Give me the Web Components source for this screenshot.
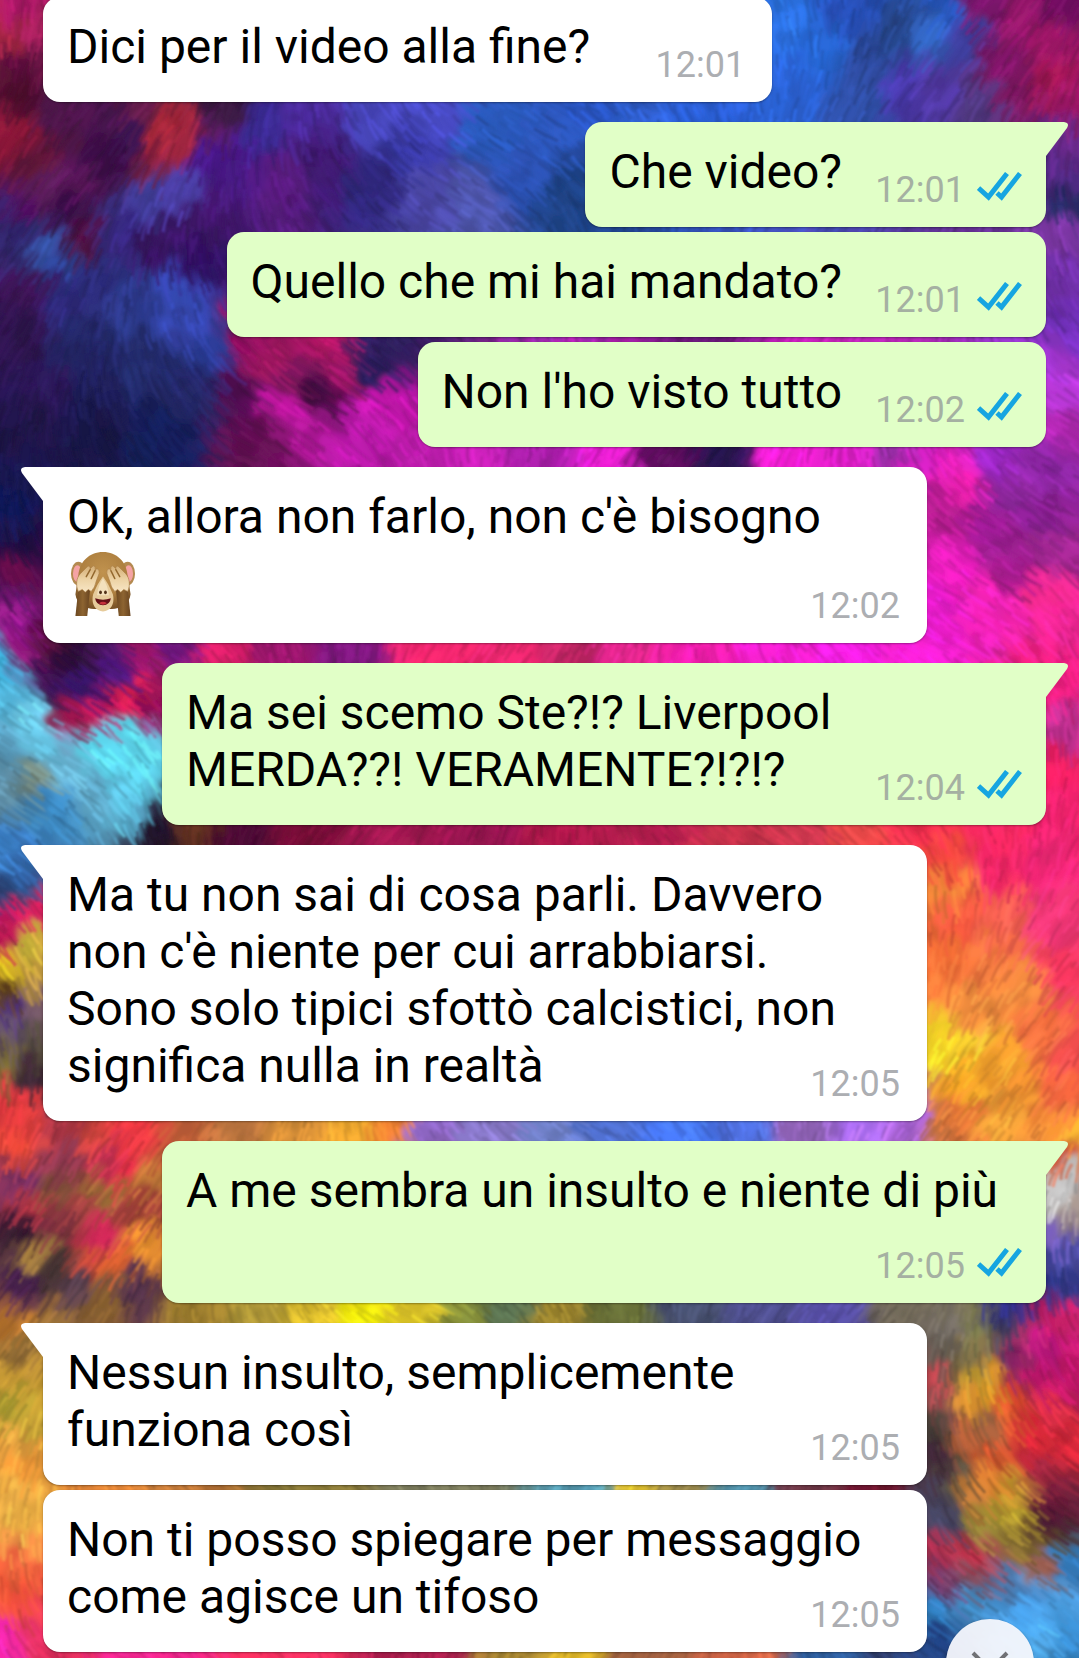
<!DOCTYPE html>
<html lang="it">
<head>
<meta charset="utf-8">
<meta name="viewport" content="width=device-width, initial-scale=1">
<title>Chat</title>
<style>
	body {
		background: #2c1858;
		font-family: Roboto, "Noto Sans", sans-serif;
		margin: 0;
	}
</style>
</head>
<body>
	<chat-screen>
		<chat-wallpaper slot="wallpaper"></chat-wallpaper>
		<chat-message time="12:01">Dici per il video alla fine?</chat-message>
		<chat-message time="12:01" outgoing first>Che video?</chat-message>
		<chat-message time="12:01" outgoing>Quello che mi hai mandato?</chat-message>
		<chat-message time="12:02" outgoing>Non l'ho visto tutto</chat-message>
		<chat-message time="12:02" first>Ok, allora non farlo, non c'è bisogno <monkey-emoji></monkey-emoji></chat-message>
		<chat-message time="12:04" outgoing first>Ma sei scemo Ste?!? Liverpool MERDA??! VERAMENTE?!?!?</chat-message>
		<chat-message time="12:05" first>Ma tu non sai di cosa parli. Davvero non c'è niente per cui arrabbiarsi.<br>Sono solo tipici sfottò calcistici, non significa nulla in realtà</chat-message>
		<chat-message time="12:05" outgoing first>A me sembra un insulto e niente di più</chat-message>
		<chat-message time="12:05" first>Nessun insulto, semplicemente funziona così</chat-message>
		<chat-message time="12:05">Non ti posso spiegare per messaggio come agisce un tifoso</chat-message>
		<scroll-button slot="action"></scroll-button>
	</chat-screen>

<script>
/**
 * @class ChatScreen
 * @description Column of messages over a wallpaper, with a slot for a floating action.
 */
class ChatScreen extends HTMLElement {
	constructor() {
		super();
		this.attachShadow({mode:'open'});
		this.shadowRoot.innerHTML = `
			<style>
				:host {
					display: block;
					min-height: 100vh;
					overflow: hidden;
					position: relative;
				}

				/* the list is scrolled by a few pixels */
				main {
					display: flex;
					flex-direction: column;
					gap: 5px;
					margin-top: -3px;
					padding: 0 33px 6px 43px;
					position: relative;
				}
			</style>
			<slot name="wallpaper"></slot>
			<main><slot></slot></main>
			<slot name="action"></slot>
		`;
	}
}

/**
 * @class ChatMessage
 * @description One bubble.
 * Attributes: time, outgoing (green, with ticks), first (first of a group, with a tail).
 */
class ChatMessage extends HTMLElement {
	static observedAttributes = ['time'];

	constructor() {
		super();
		this.attachShadow({mode:'open'});
		this.shadowRoot.innerHTML = `
			<style>
				:host {
					--bubble: #fff;
					--meta: 158px;

					align-self: flex-start;
					background: var(--bubble);
					border-radius: 17px;
					box-shadow: 0 1px 2px rgba(0,0,0,.35);
					box-sizing: border-box;
					color: #000;
					display: grid;
					max-width: calc(100% - 119px);
					padding: 21px 24px 16px;
					position: relative;
				}

				:host([outgoing]) {
					--bubble: #e1ffc7;
					--meta: 180px;

					align-self: flex-end;
				}

				:host([first]) {
					border-top-left-radius: 0;
					margin-top: 15px;
				}

				:host([outgoing][first]) {
					border-top-left-radius: 17px;
					border-top-right-radius: 0;
				}

				p, footer {
					grid-area: 1 / 1;
				}

				p {
					font-size: 48px;
					line-height: 57px;
					margin: 0 0 11px;
				}

				/* keeps the end of the last line clear of the time */
				.room {
					display: inline-block;
					height: 1px;
					width: var(--meta);
				}

				footer {
					align-items: flex-end;
					align-self: end;
					color: #acaeb2;
					display: flex;
					font-size: 36px;
					gap: 12px;
					justify-self: end;
					line-height: 42px;
					padding-right: 3px;
				}

				:host([outgoing]) footer {
					color: #a5b0a2;
					padding-right: 0;
				}

				.ticks {
					display: none;
					fill: none;
					height: 29px;
					margin-bottom: 10px;
					stroke: #16a5e1;
					stroke-width: 5;
					width: 45px;
				}

				:host([outgoing]) .ticks {
					display: block;
				}

				.tail {
					display: none;
					fill: var(--bubble);
					height: 34px;
					position: absolute;
					right: 100%;
					top: 0;
					transform: scaleX(-1);
					width: 22px;
				}

				:host([first]) .tail {
					display: block;
				}

				:host([outgoing]) .tail {
					left: 100%;
					right: auto;
					transform: none;
				}
			</style>
			<svg class="tail" viewBox="0 0 22 34" aria-hidden="true"><path d="M-1 0H18Q24 1 21 6L0 34H-1Z"/></svg>
			<p><slot></slot><span class="room"></span></p>
			<footer>
				<time></time>
				<svg class="ticks" viewBox="0 0 45 29" role="img" aria-label="Letto">
					<path d="M1.500 16L11.500 25L30 1.500M20 21L24.500 25L43 1.500"/>
				</svg>
			</footer>
		`;
	}

	attributeChangedCallback(attr, oldval, newval) {
		this.shadowRoot.querySelector('time').textContent = newval;
	}
}

/**
 * @class MonkeyEmoji
 * @description The see-no-evil monkey, as an inline picture.
 */
class MonkeyEmoji extends HTMLElement {
	constructor() {
		super();
		this.attachShadow({mode:'open'});
		this.shadowRoot.innerHTML = `
			<style>
				:host {
					display: inline-block;
					height: 65px;
					margin: 6px 5px 0 3px;
					vertical-align: bottom;
					width: 66px;
				}

				svg { display: block; }
			</style>
			<svg viewBox="0 0 66 66" width="66" height="65" role="img" aria-label="Scimmietta che non vede">
				<defs>
					<radialGradient id="fur" cx=".5" cy=".35" r=".65">
						<stop offset="0" stop-color="#c0924e"/>
						<stop offset=".65" stop-color="#ad7f3f"/>
						<stop offset="1" stop-color="#7a5427"/>
					</radialGradient>
					<linearGradient id="arm" x1="0" y1="0" x2="1" y2="0">
						<stop offset="0" stop-color="#6b4720"/>
						<stop offset=".5" stop-color="#8d6431"/>
						<stop offset="1" stop-color="#674320"/>
					</linearGradient>
					<linearGradient id="hand" x1="0" y1="0" x2="0" y2="1">
						<stop offset="0" stop-color="#d3ad75"/>
						<stop offset=".5" stop-color="#ecd2a4"/>
						<stop offset="1" stop-color="#f8e6c6"/>
					</linearGradient>
				</defs>
				<ellipse cx="8" cy="23" rx="7.500" ry="12" fill="#b48a50"/>
				<ellipse cx="58" cy="23" rx="7.500" ry="12" fill="#b48a50"/>
				<ellipse cx="7" cy="23" rx="4.500" ry="8.500" fill="#f5a3a4"/>
				<ellipse cx="59" cy="23" rx="4.500" ry="8.500" fill="#f5a3a4"/>
				<path d="M33 1C47 1 57 11 58 25L61 44C60 54 50 59 42 59H24C16 59 6 54 5 44L8 25C9 11 19 1 33 1Z" fill="url(#fur)"/>
				<path d="M33 26C37 31 40 37 43 44C45 52 42 58 38 60Q33 63 28 60C24 58 21 52 23 44C26 37 29 31 33 26Z" fill="#e6cb9b"/>
				<path d="M33 28Q38 35 39 45H27Q28 35 33 28Z" fill="#f3e1bd"/>
				<path d="M8 38H20L17 66H5Z" fill="url(#arm)"/>
				<path d="M46 38H58L61 66H49Z" fill="url(#arm)"/>
				<path d="M8 41C5 35 6 27 10 23L17 16Q20 14 20 18L23 15Q26 15 25 19L27 18Q30 19 29 23L26 31Q25 37 21 41L18 39L15 42L12 39Z" fill="url(#hand)" stroke="#a67a42" stroke-width=".6"/>
				<path d="M58 41C61 35 60 27 56 23L49 16Q46 14 46 18L43 15Q40 15 41 19L39 18Q36 19 37 23L40 31Q41 37 45 41L48 39L51 42L54 39Z" fill="url(#hand)" stroke="#a67a42" stroke-width=".6"/>
				<path d="M20 19L16 26M25 20L21 28M46 19L50 26M41 20L45 28" fill="none" stroke="#94692f" stroke-width="1.500" stroke-linecap="round"/>
				<ellipse cx="30.500" cy="42" rx="1.400" ry="2" fill="#513219"/>
				<ellipse cx="35.500" cy="42" rx="1.400" ry="2" fill="#513219"/>
				<path d="M25 48Q33 51 41 48Q40 55 33 55Q26 55 25 48Z" fill="#641017"/>
				<path d="M29 53Q33 50 37 53Q33 56 29 53Z" fill="#c5303c"/>
			</svg>
		`;
	}
}

class ScrollButton extends HTMLElement {
	constructor() {
		super();
		this.attachShadow({mode:'open'});
		this.shadowRoot.innerHTML = `
			<style>
				:host {
					bottom: -49px;
					position: absolute;
					right: 45px;
				}

				button {
					background: rgba(245,247,252,.95);
					border: 0;
					border-radius: 50%;
					box-shadow: 0 1px 3px rgba(0,0,0,.3);
					display: block;
					height: 88px;
					padding: 0;
					width: 88px;
				}

				svg {
					display: block;
					fill: none;
					margin: auto;
					stroke: #707175;
					stroke-width: 4;
				}
			</style>
			<button type="button" aria-label="Vai in fondo">
				<svg viewBox="0 0 40 24" width="40" height="24" aria-hidden="true"><path d="M3 2L20 19L37 2"/></svg>
			</button>
		`;
	}
}

/**
 * @class ChatWallpaper
 * @description Dyed-feather wallpaper, painted with short strokes.
 * Each stroke takes the colour of the dye spot nearest to it.
 */
class ChatWallpaper extends HTMLElement {
	/**
	 * @type {string}
	 * @description Dye spots: x, y and colour.
	 */
	static dyes = `
		15,10,b01a6a 30,40,a0205a 10,45,b02848 20,70,601040 15,100,501030 10,150,8a1838 30,170,601838
		60,120,50184c 100,130,4a1450 140,120,6a2050 160,135,a82838 185,140,a82840 130,150,3a1450 150,165,882040
		100,170,3c1048 220,120,3a1a40 210,140,5a1c60 210,165,4a1a8c 240,180,4a1a88 260,140,3a2a90 280,190,5a1c80
		320,130,4a2a98 330,170,401a70 380,130,4a48c0 440,120,4a4cc8 420,160,3a3aa8 380,190,30287c 440,200,4c48a8
		480,210,5058b0 500,140,2a58b8 530,180,2c50b0 560,150,2c55b8 570,200,204488 40,200,602060 80,190,581458
		150,210,4440a0 180,205,4c40a8 120,240,3a2a88 60,220,3a1048 30,210,501060 20,240,302468 40,250,3450a0
		60,270,2c4698 80,250,501040 110,230,3a3080 150,250,381460 190,240,40186c 210,230,441870 200,270,301060
		100,290,2c2c78 60,310,302c80 30,300,401458 20,340,301450 80,350,242868 130,310,2c3888 180,310,3448b0
		200,340,3444a8 220,360,2c3c98 150,380,242c6c 100,400,20205c 40,400,2c1858 200,400,242868 20,440,201448
		100,440,1a1848 170,440,14205c 250,350,901060 280,370,a01860 300,390,801860 340,350,b81868 350,380,a01868
		390,350,302060 250,400,501050 290,410,c018a0 270,440,601050 310,430,b01898 330,400,400c40 380,380,2c2060
		390,410,c818b0 370,440,b81aa8 460,457,c020b0 550,457,b020b0 600,457,f020d8 660,455,601060 720,455,281450
		780,455,f020d0 850,455,e020c8 900,455,a030b0 15,480,1a1850 10,520,101858 25,560,201044 20,580,701050
		15,600,401050 15,620,a02090 30,640,801080
		60,650,501038 30,655,901878 80,665,2c1038 0,670,38a8d0 15,700,58c0e8 40,720,70d0f0 60,690,401050
		50,750,68c8e8 20,760,5898b8 20,790,6090a8 40,785,788c80 70,770,6cb8d8 110,760,60e0f8 140,745,60e0f8
		150,780,60d8f0 140,810,60c8e8 100,800,60a8c8 60,815,3c88c0 80,690,401878 100,700,401470 130,680,501880
		110,715,c01858 140,700,e82058 85,722,a01850 155,720,901058 150,660,a01868 120,652,501868 180,650,701880
		230,652,d82068 280,652,a01870 350,652,801880 430,652,f82870 520,652,f02870 560,652,c82868 620,652,e82890
		700,652,f820b0 780,652,f820d0 860,652,f820e0 920,655,f820d0
		790,30,2c70e0 820,60,2868d8 800,90,2c64d8 850,20,2850b8 870,70,2c4898 900,40,284890 930,40,3060b8
		940,20,2858c0 960,50,4040a0 900,100,4838a8 860,110,3050a8 930,100,5038a0 980,20,801870 1020,30,98186c
		1050,50,a01868 1000,70,801868 1060,20,701060 1050,90,a81858 1010,100,7c1860 980,110,503880 700,110,2c60d8
		650,112,3060d0 600,115,2c58c8 1070,110,a01868 1065,150,682888 1060,190,502880 1070,215,282c68
		1062,240,8038a8 1062,290,7030a8 1070,330,7030b8 1062,370,a838d8 1070,400,b838d8 1065,430,b028b0
		950,480,e820b8 930,465,d020c0 1000,465,9828c0 1050,470,9028a8 1020,500,9028a0 970,490,f020b0
		950,520,c02098 1000,530,981c90 1050,530,882090 1020,560,9c2090 1060,560,a02890 1020,580,a01c88
		940,550,d020a8 960,580,f820c8 940,610,f820d8 1000,610,f824b8 1050,600,f82c90 1070,630,f82898
		1060,690,f02080 1070,740,c03090 1065,780,f02060 1070,820,f82470
		165,835,201028 190,833,603020 240,833,500838 300,833,781038 400,835,a01850 480,835,981450 560,835,a81848
		660,835,b82050 740,835,c03048 820,835,d03850 860,833,e84848 930,835,f83050 1000,840,f82860
		15,860,3c80c8 30,880,3060a0 15,900,284070 15,925,c01860 35,925,e02060 10,945,b01050 30,950,d8c040
		15,975,e0c020 35,985,c8a040 10,1000,604020 15,1020,503080 35,1020,806070 20,1050,605060 35,1060,504838
		10,1080,807038 30,1090,402838 15,1115,e03840 20,1130,e84040 15,1160,e84838 60,1140,b03848 90,1140,d84840
		130,1140,e83840 60,1170,903850 110,1170,c03050 20,1190,783060 120,1180,e03048 50,1200,805038
		100,1200,a07038 140,1190,c07838 80,1220,a04040 30,1220,c03848 140,1220,a04038 100,1240,d02858
		50,1235,803040 20,1245,301830 140,1255,e89030 120,1270,d86030 90,1270,c04838 30,1265,a88040
		50,1275,403030 80,1290,584050 20,1290,482050 130,1295,503048 100,1310,886030
		180,1130,c06038 230,1130,c07840 300,1130,d89038 360,1130,f0a830 395,1130,f08030 430,1130,9068c8
		500,1130,8878c8 560,1130,7080c8 610,1130,5070d0 690,1130,4878f8 750,1130,5070e0 800,1130,9868c0
		860,1130,b070f8 910,1130,b068e0 940,1130,d07840
		950,870,f84840 1000,880,f82868 1050,870,f82878 950,900,f08838 960,930,f85840 1000,930,f86050
		1050,930,f83878 950,970,f87038 980,970,f87840 1060,980,f83860 1020,1000,f88c40 970,1020,f89040
		940,1060,f8d828 960,1055,f0c830 1000,1070,f8a030 1040,1040,f87040 1070,1060,f85050 960,1090,f8a828
		1010,1100,f09030 1060,1100,f86840 950,1125,f07838 1000,1125,f0a038 1050,1130,f88838 1065,1150,f8a830
		1062,1170,e06040 1065,1190,b0b0b0 1060,1210,c8c8c8 1070,1225,a09088 1062,1245,7058b0 1070,1265,5050a8
		200,1312,a08030 260,1312,b09838 320,1312,e0c030 370,1312,f8f010 420,1312,d8c028 470,1312,889038
		510,1312,587050 560,1312,a08830 620,1312,687038 690,1312,485070 760,1312,505090 830,1312,5850a8
		900,1315,706858 1060,1290,303888 1030,1300,2c2c88 1000,1310,303090 960,1310,807860 950,1340,787068
		980,1340,808050 1010,1340,403c60 940,1370,605850 970,1370,807048 1030,1350,b83070 1060,1330,c82068
		1050,1360,c01880 1020,1380,802060 1040,1390,b81868 1070,1390,c01868 935,1395,c04850 980,1390,c09830
		1000,1400,e8a028 970,1410,d89030 1020,1405,e04830 1060,1420,e03048 1010,1425,e06030 950,1420,784848
		940,1440,484038 990,1440,906040 970,1455,b86038 1000,1460,d85830 1040,1450,d82838 1070,1450,d02838
		1050,1480,a02840 940,1470,402838 960,1490,585040 1000,1490,d88030 1020,1500,c89830 980,1510,c07838
		1060,1510,681c38 940,1510,484058 1010,1530,b09830 1030,1520,c0a830 1060,1530,481830 950,1530,484868
		990,1540,988838 940,1555,b03050 980,1560,b83048 1030,1550,887030 1060,1550,584028 1050,1575,a06050
		1000,1570,a84858 950,1590,703868 980,1590,885060 1070,1570,3078b8 1020,1590,4870a0 940,1620,3080c0
		980,1610,4088c0 1040,1600,4898e0 1060,1620,50a8f0 1030,1620,48a0e8 1070,1650,3888c8 940,1645,204080
		935,1655,284888 1050,1650,50a8e8
		15,1335,c07830 30,1345,a07838 20,1360,987038 15,1385,d0a038 30,1400,b89030 10,1420,a89830
		30,1430,c8a838 15,1450,e0a040 20,1480,f09838 15,1500,f0b048 20,1530,f8b848 15,1550,f89848
		20,1580,f86840 15,1600,f85838 20,1620,f85040 30,1640,f83870 10,1650,f828b0
		100,1487,e88838 200,1487,c07838 300,1487,887838 450,1487,808060 590,1487,58a0b8 630,1487,e0c030
		680,1487,908048 740,1487,5090a8 800,1487,703848 880,1487,701830 60,1655,e83060 150,1655,f82890
		300,1655,f83060 420,1655,b02050 520,1655,a08030 570,1655,d8b028 640,1655,a06040 750,1655,d86848
		830,1655,3060a0 900,1655,304070
	`;

	#seed = 7;

	constructor() {
		super();
		this.attachShadow({mode:'open'});
		this.spots = ChatWallpaper.dyes.trim().split(/\s+/).map(item => {
			const [x, y, hex] = item.split(',');
			const n = parseInt(hex, 16);
			return {x: +x, y: +y, rgb: [n >> 16, n >> 8 & 255, n & 255]};
		});

		this.shadowRoot.innerHTML = `
			<style>
				:host {
					display: block;
					inset: 0;
					overflow: hidden;
					position: absolute;
				}

				svg {
					display: block;
					height: 100%;
					width: 100%;
				}
			</style>
			<svg viewBox="0 0 1079 1658" preserveAspectRatio="xMidYMid slice" aria-hidden="true">
				<defs>
					<filter id="soft" x="0" y="0" width="1" height="1"><feGaussianBlur stdDeviation="3"/></filter>
					<filter id="fine" x="0" y="0" width="1" height="1"><feGaussianBlur stdDeviation=".8"/></filter>
				</defs>
				<g filter="url(#soft)" fill="none" stroke-linecap="round">${this.strokes(13, 20, 26, 0.12)}</g>
				<g filter="url(#fine)" fill="none" opacity=".6">${this.strokes(10, 3, 20, 0.25)}</g>
			</svg>
		`;
	}

	/** Repeatable random number, 0 to 1 */
	random() {
		this.#seed = (this.#seed * 16807) % 2147483647;
		return this.#seed / 2147483647;
	}

	/** Blend of the spots around a point, weighted to the nearest */
	colour(x, y, shade) {
		const sum = [0, 0, 0];
		let total = 0;
		for (const spot of this.spots) {
			const d = (spot.x - x) ** 2 + (spot.y - y) ** 2 + 20;
			const weight = 1 / (d * d * d);
			total += weight;
			for (let i = 0; i < 3; i++) sum[i] += spot.rgb[i] * weight;
		}
		const rgb = sum.map(v => Math.min(255, Math.round(v / total * shade)));
		return `rgb(${rgb})`;
	}

	/**
	 * @param {number} step - distance between strokes
	 * @param {number} width - stroke width
	 * @param {number} length - mean stroke length
	 * @param {number} contrast - how far the brightness varies
	 */
	strokes(step, width, length, contrast) {
		let out = '';
		for (let gy = -10; gy < 1675; gy += step) {
			for (let gx = -10; gx < 1095; gx += step) {
				const x = gx + (this.random() - .5) * step;
				const y = gy + (this.random() - .5) * step;
				const angle = -1.9 + Math.sin(x / 130 + y / 170) * .8 + this.random() * .3;
				const size = length * (.5 + this.random());
				const dx = Math.round(Math.cos(angle) * size);
				const dy = Math.round(Math.sin(angle) * size);
				const shade = 1 + (this.random() - .5) * 2 * contrast;
				out += `<path d="M${Math.round(x - dx / 2)} ${Math.round(y - dy / 2)}q${Math.round(dx / 2 + dy / 8)} ${Math.round(dy / 2)} ${dx} ${dy}" stroke="${this.colour(x, y, shade)}" stroke-width="${width}"/>`;
			}
		}
		return out;
	}
}

customElements.define('chat-wallpaper', ChatWallpaper);
customElements.define('monkey-emoji', MonkeyEmoji);
customElements.define('scroll-button', ScrollButton);
customElements.define('chat-message', ChatMessage);
customElements.define('chat-screen', ChatScreen);
</script>
</body>
</html>
